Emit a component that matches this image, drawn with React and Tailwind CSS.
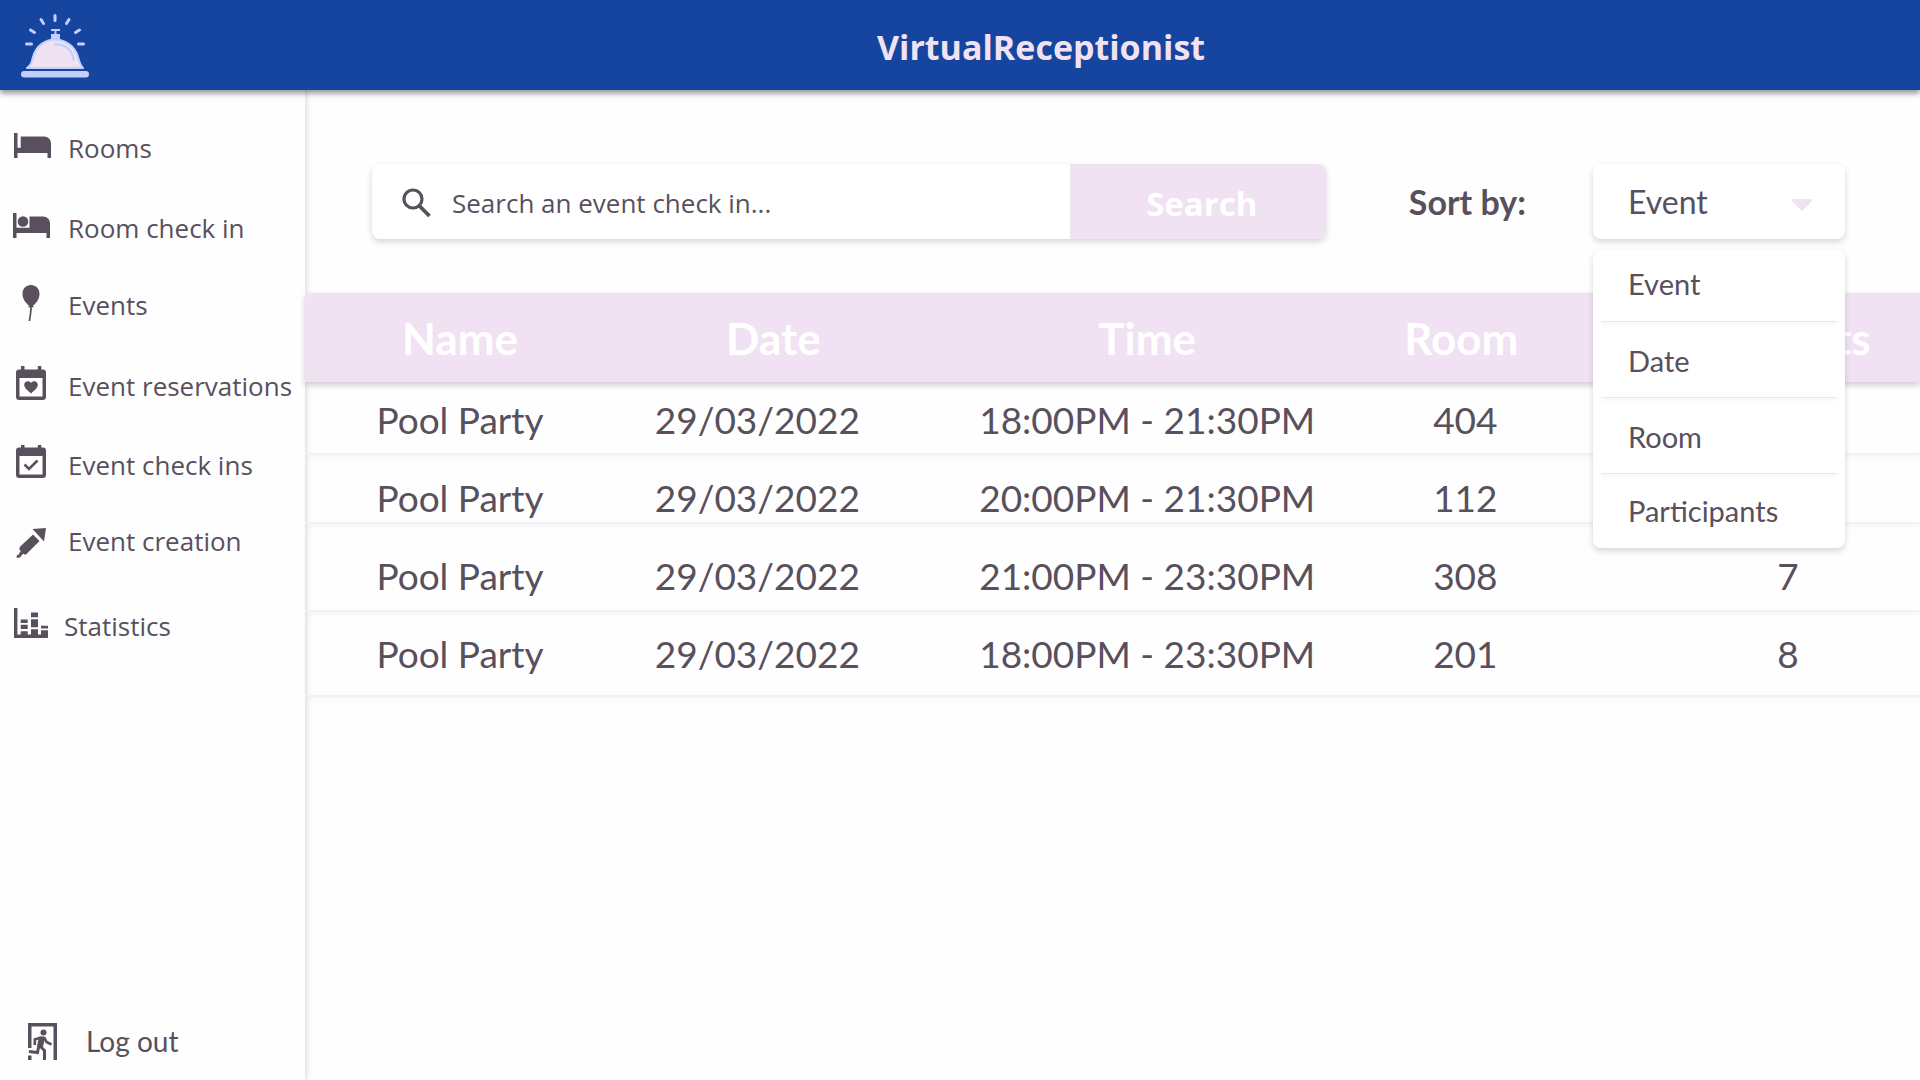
import { useState } from 'react';

const segoe = "font-['Open_Sans','Noto_Sans',sans-serif]";

function BellLogo() {
  return (
    <svg viewBox="0 -1 70 66" className="h-[66px] w-[70px]" aria-hidden="true">
      <g stroke="#c3cfff" strokeWidth="3" strokeLinecap="round">
        <path d="M35 2.5v5M21 6.5l2.5 4M49 6.5l-2.500 4M10.500 17l4 2.500M59.500 17l-4 2.500M6.500 31h5M58.500 31h5" />
      </g>
      <path d="M31 16h9v2h-3.500v3H40v6h-9v-6h3.500v-3H31z" fill="#c3cfff" />
      <path d="M7 55c4-3 4.500-5 6-11C16 33 25 26.500 35 26.500S55 33 58 44c1.500 6 2 8 5 11z" fill="#f0e2f3" stroke="#c3cfff" strokeWidth="2" strokeLinejoin="round" />
      <path d="M35 31.500c10 0 17 5 18.500 15" fill="none" stroke="#c3cfff" strokeWidth="2.500" strokeLinecap="round" />
      <rect x="1" y="58" width="68" height="6.500" rx="3.200" fill="#c3cfff" />
    </svg>
  );
}

function Icon({ viewBox = '0 0 40 40', className = 'size-10', children }) {
  return (
    <svg viewBox={viewBox} className={`${className} shrink-0`} fill="currentColor" aria-hidden="true">
      {children}
    </svg>
  );
}

const BedIcon = () => (
  <Icon viewBox="0 0 40 40">
    <path d="M2 5h3.500v14.800h3.200V8.500H32c4.200 0 7 3 7 7V30h-3.500v-5h-30v5H2z" />
  </Icon>
);

const GuestBedIcon = () => (
  <Icon viewBox="0 0 40 40">
    <path d="M1 5h3.500v14.800h13V8.500H31c4.200 0 7 3 7 7V30h-3.500v-5h-30v5H1z" />
    <circle cx="11" cy="13.500" r="5.300" />
  </Icon>
);

const BalloonIcon = () => (
  <Icon viewBox="1 2 40 40">
    <path d="M20 2c5 0 8.500 3.700 8.500 9 0 5-3.500 9.500-6.500 11.500l1 1.800h-2.100c-.1 5-.8 9-1.700 13.700h-1.700c1-5 1.500-9 1.600-13.700H17l1-1.800c-3-2-6.500-6.500-6.500-11.500 0-5.300 3.500-9 8.500-9z" />
  </Icon>
);

const CalendarFrame = () => (
  <path
    fillRule="evenodd"
    d="M10 3h3.500v3.500h13.300V3h3.500v3.500H32c1.800 0 3 1.200 3 3V34c0 1.800-1.200 3-3 3H8c-1.800 0-3-1.200-3-3V9.500c0-1.800 1.200-3 3-3h2zM8.500 15v18.500h23V15z"
  />
);

const CalendarHeartIcon = () => (
  <Icon viewBox="1 3 40 40">
    <CalendarFrame />
    <path d="M20 30.500l-1-.9c-4-3.600-5.800-5.300-5.800-7.800 0-2.100 1.600-3.600 3.600-3.600 1.300 0 2.500.6 3.200 1.600.7-1 1.900-1.600 3.200-1.600 2 0 3.600 1.500 3.600 3.600 0 2.500-1.800 4.200-5.800 7.800z" />
  </Icon>
);

const CalendarCheckIcon = () => (
  <Icon viewBox="1 4 40 40">
    <CalendarFrame />
    <path d="M13.500 23.500l4.500 4.500 8.500-8.500" fill="none" stroke="currentColor" strokeWidth="2.600" />
  </Icon>
);

const RocketIcon = () => (
  <Icon>
    <path d="M20.500 7L34 6 32 19.500zM21 12.500l6.500 6.500-14 14-1.800-1.200-2 1.200c-.5 2-2 3-5 3v-2.700c1.700 0 2.200-.5 2.500-1.700l1.500-2.500-1.500-1.800.8-2.500z" />
  </Icon>
);

const StatsIcon = () => (
  <Icon viewBox="1 3 40 40">
    <path d="M3 5h3.400v26.500H37V35H3z" />
    <path d="M9.700 16.500h7v3.500h-7zM9.700 21.700h7V26h-7zM9.700 28.200h7V32h-7z" />
    <path d="M20 9.500h7v4.700h-7zM20 16.200h7v8h-7zM20 26.200h7V32h-7z" />
    <path d="M30 22.700h7v2.700h-7zM30 27.300h7V32h-7z" />
  </Icon>
);

const ExitIcon = () => (
  <Icon>
    <path d="M6 2h29v37h-3.500V5.500H9.500V27H6zM6 34.500h3.500V39H6z" />
    <circle cx="21.500" cy="11.500" r="3" />
    <g fill="none" stroke="currentColor">
      <path d="M12.800 24v-5.500l6.200-2 3.500.5 2 4 5 2.500" strokeWidth="2.600" />
      <path d="M20 16.500l-2 9" strokeWidth="6" />
      <path d="M17 24l-1.500 7.500-8.500-1" strokeWidth="3" />
      <path d="M18 25l4.500 4.500V39" strokeWidth="3" />
    </g>
  </Icon>
);

const SearchIcon = () => (
  <Icon viewBox="0 0 32 32" className="size-8">
    <circle cx="13" cy="13" r="9" fill="none" stroke="currentColor" strokeWidth="3.200" />
    <path d="M19 19.500L29.500 30" stroke="currentColor" strokeWidth="3.800" />
  </Icon>
);

const navItems = [
  { label: 'Rooms', icon: BedIcon, height: 'h-[76px]', gap: 'gap-4' },
  { label: 'Room check in', icon: GuestBedIcon, height: 'h-[84px]', gap: 'gap-4' },
  { label: 'Events', icon: BalloonIcon, height: 'h-[70px]', gap: 'gap-4' },
  { label: 'Event reservations', icon: CalendarHeartIcon, height: 'h-[92px]', gap: 'gap-4' },
  { label: 'Event check ins', icon: CalendarCheckIcon, height: 'h-[66px]', gap: 'gap-4' },
  { label: 'Event creation', icon: RocketIcon, height: 'h-[87px]', gap: 'gap-4' },
  { label: 'Statistics', icon: StatsIcon, height: 'h-[82px]', gap: 'gap-3' },
];

const rows = [
  { name: 'Pool Party', date: '29/03/2022', time: '18:00PM - 21:30PM', room: '404', people: '5', pad: 'pt-[14px] pb-[9px]' },
  { name: 'Pool Party', date: '29/03/2022', time: '20:00PM - 21:30PM', room: '112', people: '6', pad: 'pt-[19px] pb-0' },
  { name: 'Pool Party', date: '29/03/2022', time: '21:00PM - 23:30PM', room: '308', people: '7', pad: 'pt-7 pb-[10px]' },
  { name: 'Pool Party', date: '29/03/2022', time: '18:00PM - 23:30PM', room: '201', people: '8', pad: 'pt-[18px] pb-[17px]' },
];

const divider = 'border-b border-[#f0e2f3] shadow-[0_4px_4px_-1px_rgba(0,0,0,0.03)]';

const sortOptions = [
  { label: 'Event', box: `h-[72px] pb-1 ${divider}` },
  { label: 'Date', box: `h-[76px] pt-0.5 ${divider}` },
  { label: 'Room', box: `h-[76px] pt-0.5 ${divider}` },
  { label: 'Participants', box: 'h-[74px]' },
];

export default function App() {
  const [sort, setSort] = useState('Event');
  return (
    <div className="flex min-h-screen flex-col bg-[#fefefe] font-['Lato','Open_Sans',sans-serif] text-[#58505d]">
      <header className="relative z-10 flex h-[90px] items-center bg-[#15459e] shadow-[0_3px_6px_rgba(0,0,0,0.45)]">
        <div className="w-[162px] pl-5">
          <BellLogo />
        </div>
        <h1 className={`${segoe} flex-1 pt-1 text-center text-[34px] leading-[44px] font-bold text-[#f0e2f3]`}>
          VirtualReceptionist
        </h1>
      </header>

      <div className="flex flex-1">
        <aside className="flex w-[305px] shrink-0 flex-col justify-between bg-[#fefefe] shadow-[1px_0_6px_rgba(0,0,0,0.16)]">
          <nav className={`${segoe} pt-5 text-[26px]`}>
            <ul>
              {navItems.map(({ label, icon: ItemIcon, height, gap }) => (
                <li key={label}>
                  <a href="#" className={`flex items-center pl-3 whitespace-nowrap ${height} ${gap}`}>
                    <ItemIcon />
                    {label}
                  </a>
                </li>
              ))}
            </ul>
          </nav>
          <button type="button" className="flex h-[78px] items-center gap-6 pl-[22px] text-[28px]">
            <ExitIcon />
            Log out
          </button>
        </aside>

        <main className="min-w-0 flex-1">
          <div className="flex items-center pt-[74px] pr-[75px] pb-[54px] pl-[67px]">
            <form
              className={`${segoe} flex h-[75px] flex-1 overflow-hidden rounded-lg bg-white shadow-[0_3px_6px_rgba(0,0,0,0.16)]`}
              onSubmit={(e) => e.preventDefault()}
            >
              <label className="flex flex-1 items-center gap-5 pl-7">
                <SearchIcon />
                <input
                  type="text"
                  aria-label="Search"
                  placeholder="Search an event check in..."
                  className="min-w-0 flex-1 pt-1 text-[26px] outline-none placeholder:text-[#58505d] placeholder:opacity-100"
                />
              </label>
              <button type="submit" className="w-[256px] bg-[#f0e2f3] pt-1 pl-2 text-[33px] font-bold text-white">
                Search
              </button>
            </form>

            <label htmlFor="sort" className="pr-[67px] pl-[83px] text-[34px] font-bold">
              Sort by:
            </label>

            <div className="relative w-[252px]">
              <select
                id="sort"
                value={sort}
                onChange={(e) => setSort(e.target.value)}
                className="block h-[75px] w-full appearance-none rounded-lg bg-white pl-[35px] text-[32px] shadow-[0_3px_6px_rgba(0,0,0,0.16)] outline-none"
              >
                {sortOptions.map(({ label }) => (
                  <option key={label}>{label}</option>
                ))}
              </select>
              <svg viewBox="0 0 20 12" className="pointer-events-none absolute top-[35px] right-[33px] h-3 w-5" fill="#f0e2f3" aria-hidden="true">
                <path d="M1.500 0h17c1.300 0 1.900 1.500 1 2.500l-8.300 8.700c-.6.700-1.800.7-2.400 0L.5 2.500C-.4 1.500.2 0 1.500 0z" />
              </svg>

              <ul className="absolute top-[86px] left-0 z-10 w-full rounded-lg bg-white px-2 shadow-[0_3px_6px_rgba(0,0,0,0.16)]">
                {sortOptions.map(({ label, box }) => (
                  <li key={label} className={box}>
                    <button type="button" onClick={() => setSort(label)} className="h-full w-full pl-[27px] text-left text-[29px]">
                      {label}
                    </button>
                  </li>
                ))}
              </ul>
            </div>
          </div>

          <table className="w-full table-fixed text-center">
            <colgroup>
              <col className="w-[19.2%]" />
              <col className="w-[19.6%]" />
              <col className="w-[26.7%]" />
              <col className="w-[12.2%]" />
              <col />
            </colgroup>
            <thead>
              <tr className="h-[89px] bg-[#f0e2f3] text-[44px] leading-[64px] text-white shadow-[0_3px_6px_rgba(0,0,0,0.2)]">
                <th className="font-bold">Name</th>
                <th className="font-bold">Date</th>
                <th className="font-bold">Time</th>
                <th className="font-bold">Room</th>
                <th className="pl-7 font-bold">Participants</th>
              </tr>
            </thead>
            <tbody>
              {rows.map((row) => (
                <tr key={row.time + row.room} className="border-b-2 border-[#f6eef8] text-[37px] leading-[48px] whitespace-nowrap shadow-[0_5px_5px_-1px_rgba(0,0,0,0.03)]">
                  <td className={row.pad}>{row.name}</td>
                  <td className={`pr-8 ${row.pad}`}>{row.date}</td>
                  <td className={row.pad}>{row.time}</td>
                  <td className={`pl-2 ${row.pad}`}>{row.room}</td>
                  <td className={`pl-24 ${row.pad}`}>{row.people}</td>
                </tr>
              ))}
            </tbody>
          </table>
        </main>
      </div>
    </div>
  );
}
